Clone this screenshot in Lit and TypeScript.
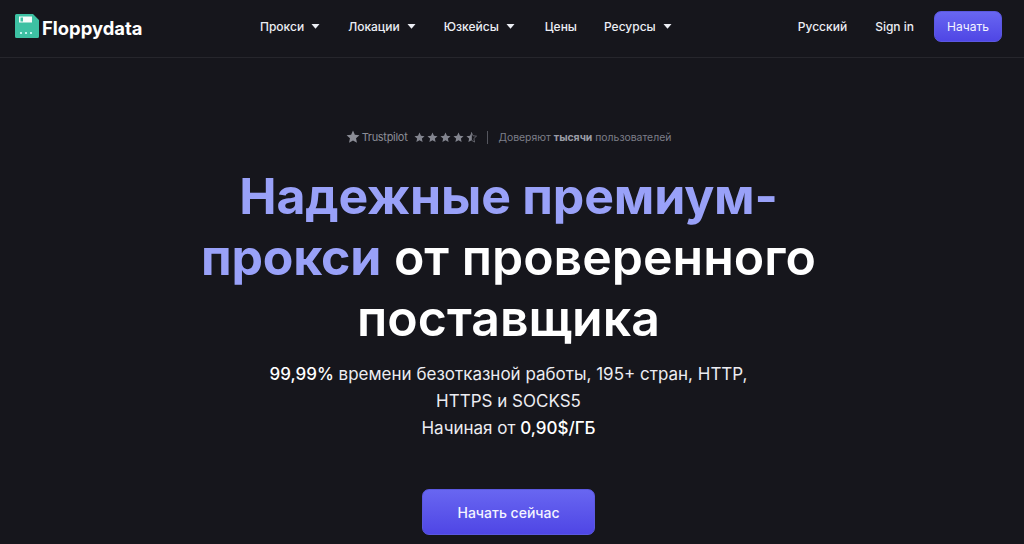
import { LitElement, html, css, svg } from "lit";
import { customElement } from "lit/decorators.js";

const caret = html`<svg class="caret" width="9" height="5" viewBox="0 0 9 5"><path d="M0.500 0h8L4.500 4.800z" fill="#eceef4"/></svg>`;
const star = (d: string) => svg`<path d="M6 .5l1.600 3.600 3.900.4-2.900 2.600.8 3.900L6 9l-3.400 2 .8-3.900L.5 4.500l3.900-.4z" fill="${d}"/>`;

@customElement("app-root")
export class AppRoot extends LitElement {
  static styles = css`
    :host { display: block; width: 1024px; height: 544px; overflow: hidden; background: #16161c; font-family: Inter, "Liberation Sans", sans-serif; color: #fff; }
    header { height: 58px; box-sizing: border-box; border-bottom: 1px solid #26262c; display: flex; align-items: center; padding: 0 22px 4px 15px; }
    .logo { display: flex; align-items: center; gap: 3px; font-family: Inter, sans-serif; font-weight: 700; font-size: 18.4px; color: #fff; width: 245px; flex: none; }
    .logo svg { margin-top: -2px; }
    .logo span { margin-top: 3px; }
    nav { display: flex; align-items: center; gap: 28px; font-size: 12px; font-weight: 500; color: #eceef4; flex: none; }
    nav span { display: inline-flex; align-items: center; gap: 7px; }
    nav span.plain { margin: 0 -1px 0 2px; }
    .right { margin-left: auto; display: flex; align-items: center; font-size: 12px; font-weight: 500; color: #eceef4; }
    .right .signin { margin-left: 28px; }
    .btn { background: linear-gradient(180deg, #6866f1, #4f46e5); color: #f4f4ff; border-radius: 7px; border: 1px solid #5b58e0; box-sizing: border-box; display: flex; align-items: center; justify-content: center; }
    .start { width: 68px; height: 31px; margin-left: 20px; font-weight: 400; }
    main { display: flex; flex-direction: column; align-items: center; padding-right: 7px; }
    .trust { margin-top: 69px; height: 20px; display: flex; align-items: center; font-size: 10.4px; color: #7d7f89; }
    .tp { display: flex; align-items: center; gap: 2px; font-size: 11px; letter-spacing: -0.3px; margin-right: 7px; color: #8b8d96; }
    .stars { display: flex; gap: 2px; margin-right: 10px; }
    .sep { width: 1px; height: 13px; background: #55565e; margin-right: 10px; }
    .trust b { font-weight: 700; color: #9a9ca6; }
    h1 { margin: 19px 0 0; width: 660px; text-align: center; font-size: 50px; line-height: 61px; font-weight: 600; color: #fff; }
    h1 em { font-style: normal; font-weight: 700; letter-spacing: -0.2px; color: #99a1f8; }
    .sub { margin-top: 12px; width: 520px; text-align: center; font-size: 17px; line-height: 27px; color: #ececf2; }
    .sub strong { font-weight: 500; color: #fff; }
    .cta { margin-top: 47px; width: 173px; height: 46px; font-size: 14px; font-weight: 500; }
  `;

  render() {
    const items = [["Прокси", 1], ["Локации", 1], ["Юзкейсы", 1], ["Цены", 0], ["Ресурсы", 1]] as const;
    return html`
      <header>
        <div class="logo">
          <svg width="24" height="24" viewBox="0 0 24 24">
            <path d="M1.500 0H18l6 6v16.500a1.500 1.500 0 0 1-1.500 1.500h-21A1.500 1.500 0 0 1 0 22.500V1.500A1.500 1.500 0 0 1 1.500 0z" fill="#3dc1a3"/>
            <rect x="4" y="2.500" width="13" height="6" fill="#fff" opacity=".95"/>
            <rect x="5.500" y="3.500" width="2.500" height="4" fill="#3dc1a3"/>
            <circle cx="6" cy="19" r="1.100" fill="#dff"/><circle cx="11" cy="19" r="1.100" fill="#dff"/><circle cx="16" cy="19" r="1.100" fill="#dff"/>
          </svg>
          <span>Floppydata</span>
        </div>
        <nav>
          ${items.map(([t, c]) => html`<span class=${c ? "" : "plain"}>${t}${c ? caret : ""}</span>`)}
        </nav>
        <div class="right">
          <span>Русский</span>
          <span class="signin">Sign in</span>
          <div class="btn start">Начать</div>
        </div>
      </header>
      <main>
        <div class="trust">
          <div class="tp">
            <svg width="14" height="14" viewBox="0 0 12 12"><g>${star("#8b8d96")}</g></svg>
            <span>Trustpilot</span>
          </div>
          <div class="stars">
            ${[0, 1, 2, 3].map(() => html`<svg width="11" height="11" viewBox="0 0 12 12">${star("#83858f")}</svg>`)}
            <svg width="11" height="11" viewBox="0 0 12 12"><path d="M6 .5v8.500L2.600 11l.8-3.900L.5 4.500l3.900-.4z" fill="#83858f"/><path d="M6 .5l1.600 3.600 3.900.4-2.900 2.600.8 3.900L6 9z" fill="none" stroke="#83858f" stroke-width=".7"/></svg>
          </div>
          <div class="sep"></div>
          <span>Доверяют&nbsp;<b>тысячи</b>&nbsp;пользователей</span>
        </div>
        <h1><em>Надежные премиум-<br />прокси</em> от проверенного<br />поставщика</h1>
        <div class="sub">
          <strong>99,99%</strong> времени безотказной работы, 195+ стран, HTTP,<br />
          HTTPS и SOCKS5<br />
          Начиная от <strong>0,90$/ГБ</strong>
        </div>
        <div class="btn cta">Начать сейчас</div>
      </main>
    `;
  }
}
